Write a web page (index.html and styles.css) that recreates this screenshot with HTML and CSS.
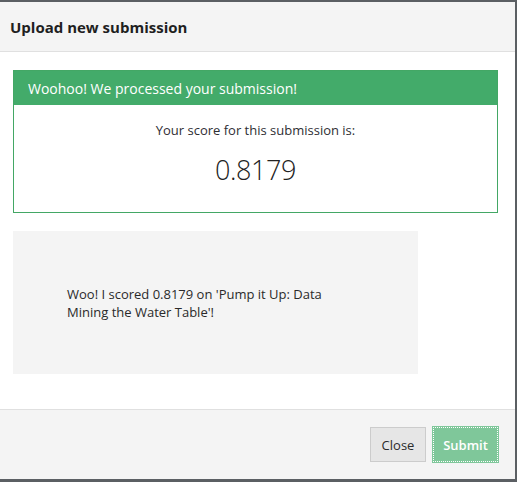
FILE: index.html
```html
<!DOCTYPE html>
<html>
<head>
<meta charset="utf-8">
<link rel="stylesheet" href="styles.css">
</head>
<body>
<div class="modal">
  <div class="modal-header">
    <h4 class="modal-title">Upload new submission</h4>
  </div>
  <div class="modal-body">
    <div class="panel">
      <div class="panel-heading">Woohoo! We processed your submission!</div>
      <div class="panel-body">
        <p class="score-label">Your score for this submission is:</p>
        <p class="score">0.8179</p>
      </div>
    </div>
    <div class="share">
      <p class="share-text">Woo! I scored 0.8179 on 'Pump it Up: Data Mining the Water Table'!</p>
    </div>
  </div>
  <div class="modal-footer">
    <button class="btn btn-default">Close</button>
    <button class="btn btn-submit">Submit</button>
  </div>
</div>
</body>
</html>
```

FILE: styles.css
```css
html, body {
  margin: 0;
  padding: 0;
  background: #5b5f63;
  width: 517px;
  height: 482px;
  overflow: hidden;
}

.modal {
  margin-top: 2px;
  width: 515px;
  height: 477px;
  background: #ffffff;
  display: flex;
  flex-direction: column;
  font-family: "Open Sans", "Noto Sans", sans-serif;
  color: #2b2b2b;
}

.modal-header {
  height: 49px;
  background: #f4f4f4;
  border-bottom: 1px solid #e0e0e0;
  padding: 0 10px;
  display: flex;
  align-items: center;
}

.modal-title {
  margin: 0;
  font-size: 15px;
  font-weight: 700;
  color: #1f1f1f;
}

.modal-body {
  flex: 1;
  padding: 18px 17px 0 13px;
}

.panel {
  border: 1px solid #43a765;
}

.panel-heading {
  height: 34px;
  background: #43ab6a;
  color: #ffffff;
  font-size: 14px;
  padding: 0 14px;
  display: flex;
  align-items: center;
}

.panel-body {
  height: 107px;
  display: flex;
  flex-direction: column;
  align-items: center;
}

.score-label {
  margin: 16px 0 0;
  font-size: 13px;
  color: #2e2e33;
}

.score {
  margin: 17px 0 0;
  font-size: 27px;
  font-weight: 300;
  letter-spacing: -0.4px;
  color: #222;
  line-height: 1;
}

.share {
  margin-top: 18px;
  width: 405px;
  height: 143px;
  background: #f4f4f4;
  display: flex;
  align-items: center;
  padding: 0 54px;
  box-sizing: border-box;
}

.share-text {
  margin: 0;
  font-size: 13px;
  line-height: 18px;
  color: #2a2a2a;
}

.modal-footer {
  background: #f4f4f4;
  border-top: 1px solid #e0e0e0;
  display: flex;
  justify-content: flex-end;
  align-items: flex-start;
  padding: 17px 17px 0 0;
  gap: 7px;
  box-sizing: border-box;
  height: 70px;
}

.btn {
  height: 35px;
  font-family: "Open Sans", "Noto Sans", sans-serif;
  font-size: 13px;
  padding: 0;
  box-sizing: border-box;
}

.btn-default {
  width: 56px;
  background: #e6e6e6;
  border: 1px solid #cccccc;
  color: #2b2b2b;
}

.btn-submit {
  width: 65px;
  background: #7fc79a;
  border: 1px dotted #ffffff;
  outline: 1px solid #7fc79a;
  color: #ffffff;
  font-weight: 600;
}
```
